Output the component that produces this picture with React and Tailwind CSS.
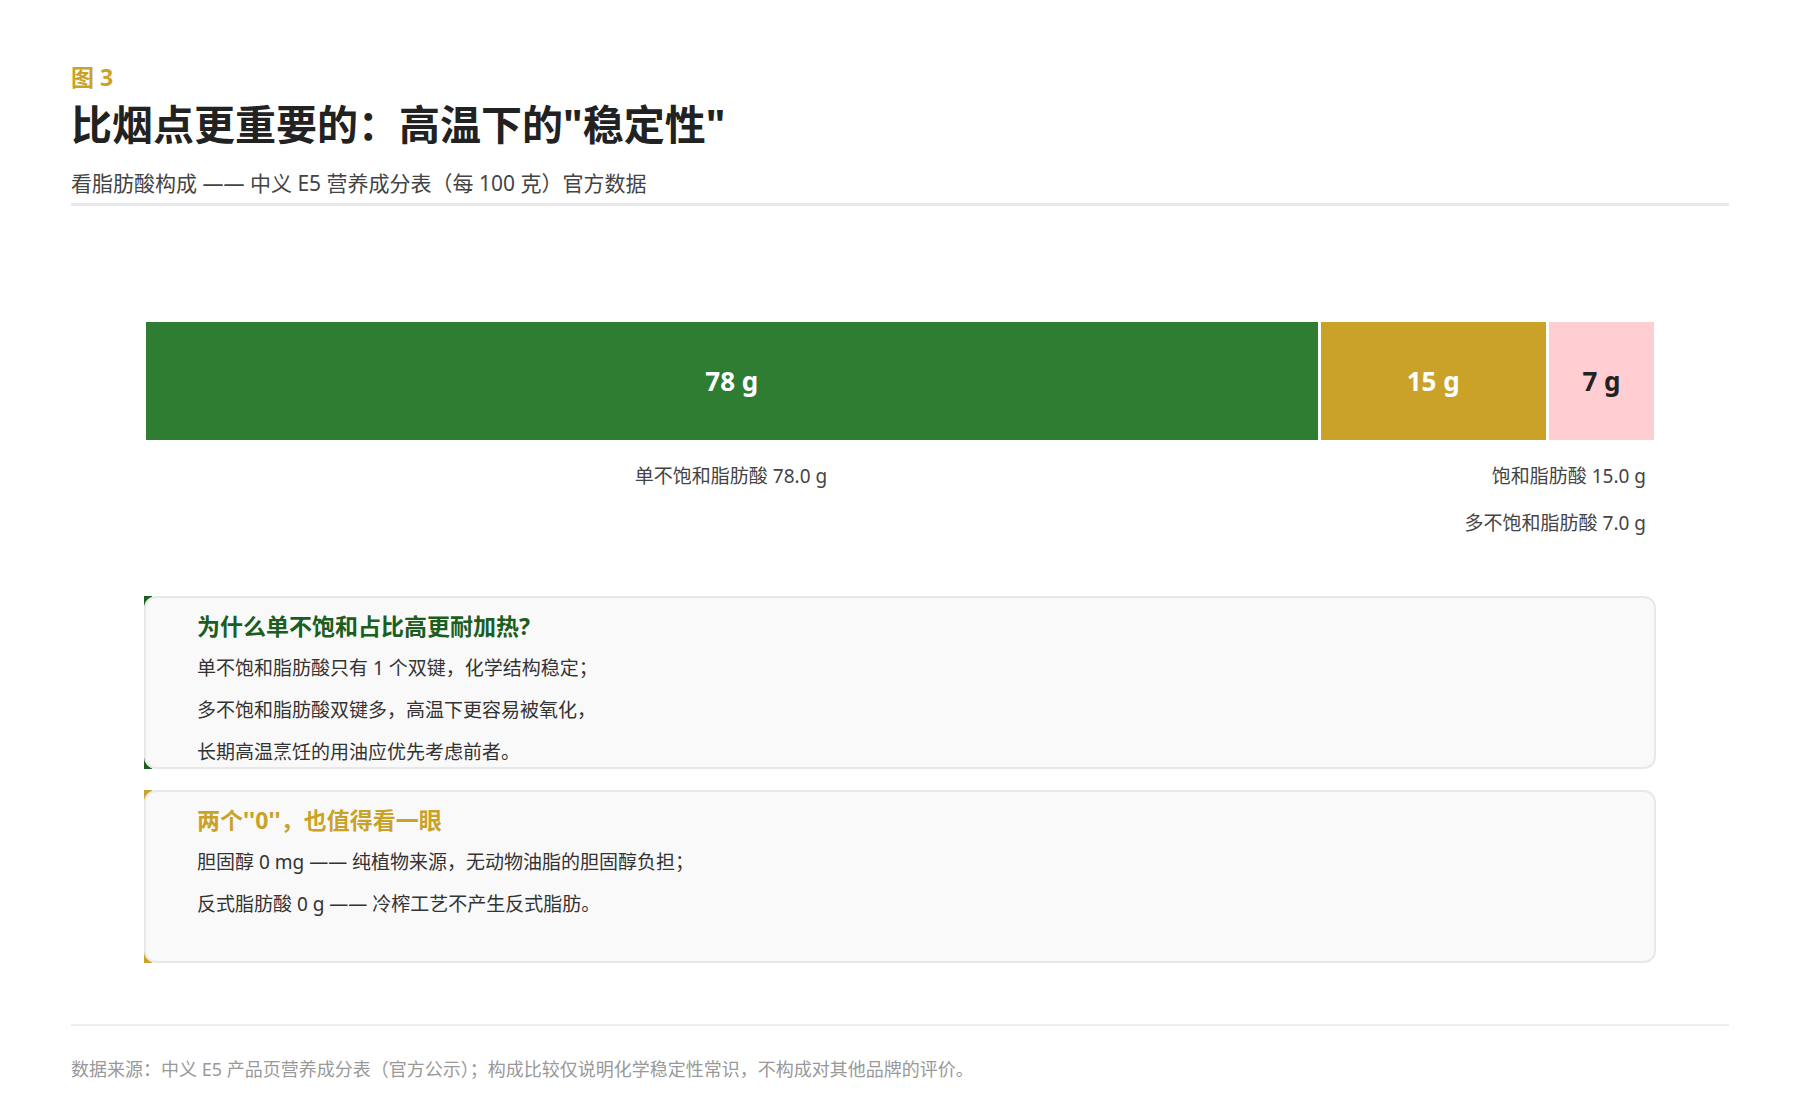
import React from 'react';

const font = { fontFamily: '"Noto Sans", "Noto Sans CJK SC", sans-serif' };

const segments = [
  { value: 78, color: 'bg-[#2e7d32]', text: 'text-white' },
  { value: 15, color: 'bg-[#c9a227]', text: 'text-white' },
  { value: 7, color: 'bg-[#ffcdd2]', text: 'text-[#222]' },
];

function Card({ accent, titleColor, title, lines }) {
  return (
    <div className={`h-[173px] ${accent}`}>
      <div className="h-full overflow-hidden rounded-xl border-2 border-[#e8e8ea] bg-[#f9f9f9] pl-[51px] pt-[10px]">
        <div className={`text-[23px] font-bold leading-[36px] ${titleColor}`}>{title}</div>
        <div className="mt-[3px] text-[19px] text-[#333]">
          {lines.map((l) => (
            <div key={l} className="leading-[42px]">{l}</div>
          ))}
        </div>
      </div>
    </div>
  );
}

export default function App() {
  return (
    <div className="w-[1800px] h-[1110px] bg-white px-[71px] pt-[60px]" style={font}>
      <div className="text-[23px] font-bold text-[#c9a227] leading-[34px]">图 3</div>
      <div className="text-[41px] font-bold text-[#222] leading-[52px] mt-[4px]">比烟点更重要的：高温下的"稳定性"</div>
      <div className="text-[21px] text-[#444] leading-[30px] mt-[18px]">看脂肪酸构成 —— 中义 E5 营养成分表（每 100 克）官方数据</div>
      <div className="h-[3px] bg-[#e8e8ea] mt-[5px]" />

      <div className="mx-[75px] mt-[116px]">
        <div className="flex h-[118px] gap-[3px]">
          {segments.map((s) => (
            <div key={s.value} style={{ flexGrow: s.value, flexBasis: 0 }} className={`${s.color} ${s.text} flex items-center justify-center text-[26px] font-bold`}>
              {s.value} g
            </div>
          ))}
        </div>
        <div className="flex text-[19px] text-[#444] leading-[47px] mt-[13px]">
          <div style={{ flexGrow: 78, flexBasis: 0 }} className="text-center">单不饱和脂肪酸 78.0 g</div>
          <div style={{ flexGrow: 22, flexBasis: 0 }} className="text-right pr-[8px]">
            <div>饱和脂肪酸 15.0 g</div>
            <div>多不饱和脂肪酸 7.0 g</div>
          </div>
        </div>
      </div>

      <div className="mx-[73px] mt-[49px] flex flex-col gap-[21px]">
        <Card
          accent="bg-[linear-gradient(to_right,#1b5e20_8px,transparent_8px)]"
          titleColor="text-[#1b5e20]"
          title="为什么单不饱和占比高更耐加热?"
          lines={['单不饱和脂肪酸只有 1 个双键，化学结构稳定；', '多不饱和脂肪酸双键多，高温下更容易被氧化，', '长期高温烹饪的用油应优先考虑前者。']}
        />
        <Card
          accent="bg-[linear-gradient(to_right,#c9a227_8px,transparent_8px)]"
          titleColor="text-[#c9a227]"
          title="两个''0''，也值得看一眼"
          lines={['胆固醇 0 mg —— 纯植物来源，无动物油脂的胆固醇负担；', '反式脂肪酸 0 g —— 冷榨工艺不产生反式脂肪。']}
        />
      </div>

      <div className="h-[2px] bg-[#eeeef0] mt-[61px]" />
      <div className="text-[18px] text-[#999] mt-[30px]">数据来源：中义 E5 产品页营养成分表（官方公示）；构成比较仅说明化学稳定性常识，不构成对其他品牌的评价。</div>
    </div>
  );
}
